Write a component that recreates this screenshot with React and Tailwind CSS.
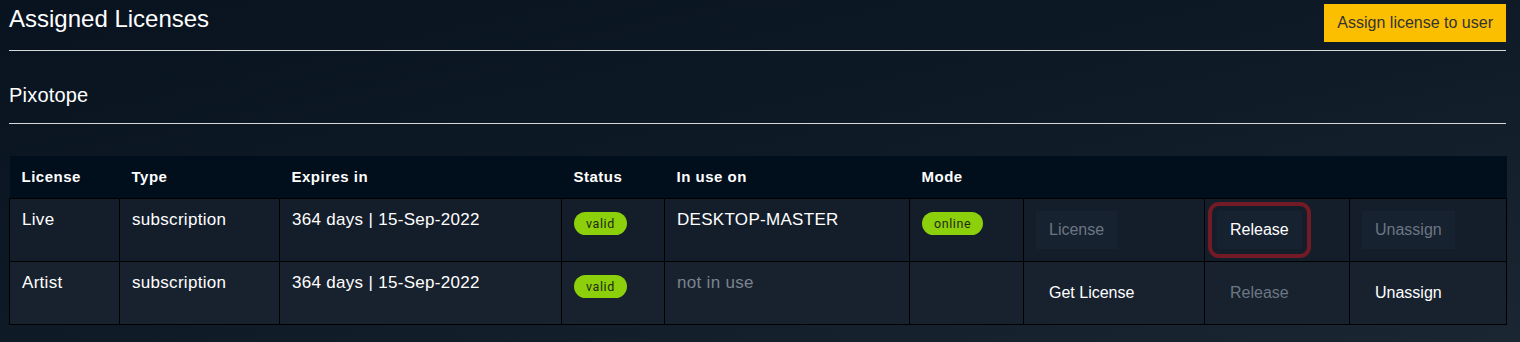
import React from 'react';

const cols = [
  { label: 'License', w: 'w-[110px]' },
  { label: 'Type', w: 'w-[160px]' },
  { label: 'Expires in', w: 'w-[282px]' },
  { label: 'Status', w: 'w-[103px]' },
  { label: 'In use on', w: 'w-[245px]' },
  { label: 'Mode', w: 'w-[114px]' },
  { label: '', w: 'w-[181px]' },
  { label: '', w: 'w-[145px]' },
  { label: '', w: 'w-[157px]' },
];

function Badge({ children }) {
  return (
    <span className="inline-flex items-center h-[23px] px-[12px] rounded-full bg-[#8ccf0b] text-[#1f2a12] text-[12.5px] leading-[23px] tracking-[0.6px] font-['Roboto',sans-serif]">
      {children}
    </span>
  );
}

function ActionButton({ children, disabled, boxed, focused }) {
  return (
    <button
      className={
        'h-[38px] px-[13px] text-[16px] ' +
        (disabled ? 'text-[#6b7682] ' : 'text-white ') +
        (boxed ? 'bg-[#172230] ' : 'bg-transparent ') +
        (focused ? 'outline-4 outline-[#721a25] outline-offset-[5px] rounded-[2px]' : '')
      }
    >
      {children}
    </button>
  );
}

const cell = 'border border-black px-[12px] align-top';
const text = 'pt-[10px] leading-[21px] text-[17px] tracking-[0.3px]';

export default function App() {
  return (
    <div className="min-h-[342px] w-full bg-gradient-to-br from-[#08131f] via-[#0f1a27] to-[#1b2633] font-['Liberation_Sans',Arial,sans-serif] text-white pl-[9px] pr-[14px]">
      {/* Title bar */}
      <div className="h-[51px] flex justify-between items-start border-b border-[#d6d8da]">
        <h1 className="text-[24px] leading-[28px] pt-[5px]">Assigned Licenses</h1>
        <button className="mt-[4px] h-[38px] px-[13px] bg-[#fcbf00] text-[#333] text-[16px]">
          Assign license to user
        </button>
      </div>

      {/* Product section */}
      <div className="h-[73px] border-b border-[#d6d8da] flex items-start">
        <h2 className="text-[20px] leading-[24px] tracking-[0.2px] pt-[32px]">Pixotope</h2>
      </div>

      <table className="mt-[32px] w-[1497px] border-collapse table-fixed">
        <thead>
          <tr className="h-[42px] bg-[#010f1c]">
            {cols.map((c, i) => (
              <th key={i} className={`${c.w} text-left font-bold text-[15px] tracking-[0.5px] px-[12px] border-b border-black`}>
                {c.label}
              </th>
            ))}
          </tr>
        </thead>
        <tbody>
          <tr className="h-[63px] bg-[#141e2b]">
            <td className={`${cell} ${text}`}>Live</td>
            <td className={`${cell} ${text}`}>subscription</td>
            <td className={`${cell} ${text}`}>364 days | 15-Sep-2022</td>
            <td className={`${cell} pt-[12px]`}><Badge>valid</Badge></td>
            <td className={`${cell} ${text}`}>DESKTOP-MASTER</td>
            <td className={`${cell} pt-[12px]`}><Badge>online</Badge></td>
            <td className={`${cell} pt-[12px]`}><ActionButton disabled boxed>License</ActionButton></td>
            <td className={`${cell} pt-[12px]`}><ActionButton boxed focused>Release</ActionButton></td>
            <td className={`${cell} pt-[12px]`}><ActionButton disabled boxed>Unassign</ActionButton></td>
          </tr>
          <tr className="h-[63px] bg-[#18222f]">
            <td className={`${cell} ${text}`}>Artist</td>
            <td className={`${cell} ${text}`}>subscription</td>
            <td className={`${cell} ${text}`}>364 days | 15-Sep-2022</td>
            <td className={`${cell} pt-[12px]`}><Badge>valid</Badge></td>
            <td className={`${cell} ${text} text-[#7b848e]`}>not in use</td>
            <td className={cell}></td>
            <td className={`${cell} pt-[12px]`}><ActionButton>Get License</ActionButton></td>
            <td className={`${cell} pt-[12px]`}><ActionButton disabled>Release</ActionButton></td>
            <td className={`${cell} pt-[12px]`}><ActionButton>Unassign</ActionButton></td>
          </tr>
        </tbody>
      </table>
    </div>
  );
}
